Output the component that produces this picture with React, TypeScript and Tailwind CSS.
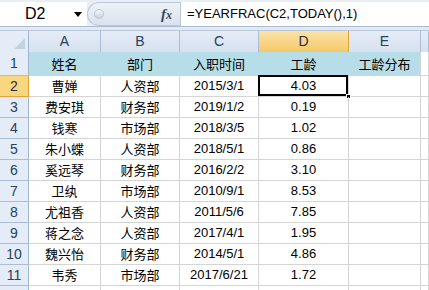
import React from 'react'

const rows = [
  ['曹婵', '人资部', '2015/3/1', '4.03'],
  ['费安琪', '财务部', '2019/1/2', '0.19'],
  ['钱寒', '市场部', '2018/3/5', '1.02'],
  ['朱小蝶', '人资部', '2018/5/1', '0.86'],
  ['奚远琴', '财务部', '2016/2/2', '3.10'],
  ['卫纨', '市场部', '2010/9/1', '8.53'],
  ['尤祖香', '人资部', '2011/5/6', '7.85'],
  ['蒋之念', '人资部', '2017/4/1', '1.95'],
  ['魏兴怡', '财务部', '2014/5/1', '4.86'],
  ['韦秀', '市场部', '2017/6/21', '1.72'],
]

const cjk = "font-['Noto_Sans_CJK_SC',sans-serif] text-[13px]"
const latin = "font-['Liberation_Sans',Arial,sans-serif] text-[13px]"
const cols = 'grid grid-cols-[29px_72px_79px_79px_90px_72px_1fr]'

const ColHead = ({ label, active }: { label: string; active?: boolean }) => (
  <div
    className={
      'flex items-center justify-center border-r text-[14px] ' +
      (active
        ? 'bg-gradient-to-b from-[#fbe3a8] to-[#f5c966] border-[#e0a23a] text-[#1f2f45]'
        : 'bg-gradient-to-b from-[#e4ecf7] to-[#d7e2ef] border-[#a9bdd4] text-[#27415f]')
    }
  >
    {label}
  </div>
)

const RowHead = ({ n, active, h }: { n: number; active?: boolean; h: string }) => (
  <div
    className={
      'flex items-center justify-center border-r border-b text-[14px] ' +
      h +
      ' ' +
      (active
        ? 'bg-[#f8d77f] border-[#e0a23a] text-[#1f2f45]'
        : 'bg-[#e4ecf7] border-r-[#9eb6ce] border-b-[#a9bdd4] text-[#27415f]')
    }
  >
    {n}
  </div>
)

const Cell = ({ children, cls = '' }: { children?: React.ReactNode; cls?: string }) => (
  <div className={'flex items-center justify-center border-r border-b border-[#d4d4d4] text-black ' + cls}>
    {children}
  </div>
)

export default function App() {
  return (
    <div className={'w-[429px] h-[290px] overflow-hidden bg-white flex flex-col ' + latin}>
      {/* formula bar */}
      <div className="h-[27px] flex border-b border-[#a9bdd4] bg-[#e9eef5] pt-[2px] shrink-0">
        <div className="w-[87px] flex items-center bg-white relative">
          <span className="text-[16px] text-black ml-[25px]">D2</span>
          <span className="absolute left-[74px] top-[10px] w-0 h-0 border-l-[4px] border-r-[4px] border-t-[5px] border-l-transparent border-r-transparent border-t-black" />
        </div>
        <div className="w-[93px] flex items-center rounded-l-full bg-gradient-to-b from-[#eef2f8] to-[#d9e2ee] border border-[#b9c7d8] border-r-0">
          <span className="ml-[6px] w-[10px] h-[10px] rounded-full bg-gradient-to-b from-[#f7f9fc] to-[#c7d2df] border border-[#b9c7d8]" />
          <span className="ml-auto mr-[8px] font-['Liberation_Serif',serif] italic font-bold text-[15px] text-[#3b4a5c]">
            f<span className="text-[12px]">x</span>
          </span>
        </div>
        <div className="flex-1 flex items-center bg-white border-l border-[#b9c7d8] pl-[6px] text-[13px] text-black">
          =YEARFRAC(C2,TODAY(),1)
        </div>
      </div>
      <div className="h-[4px] bg-[#e2e9f2] border-b border-[#b9c7d8] shrink-0" />
      {/* column headers */}
      <div className={cols + ' h-[21px] border-b border-[#9eb6ce] shrink-0'}>
        <div className="relative bg-[#e4ecf7] border-r border-[#9eb6ce]">
          <span className="absolute right-[3px] bottom-[3px] w-0 h-0 border-l-[11px] border-t-[11px] border-l-transparent border-t-transparent border-b-0 border-r-[11px] border-r-[#c5d1df]" />
        </div>
        <ColHead label="A" />
        <ColHead label="B" />
        <ColHead label="C" />
        <ColHead label="D" active />
        <ColHead label="E" />
        <ColHead label="" />
      </div>
      {/* row 1 */}
      <div className={cols + ' h-[24px] shrink-0'}>
        <RowHead n={1} h="h-[24px]" />
        <Cell cls={'bg-[#b7dee8] border-r-[#b7dee8] ' + cjk}>姓名</Cell>
        <Cell cls={'bg-[#b7dee8] border-r-[#b7dee8] ' + cjk}>部门</Cell>
        <Cell cls={'bg-[#b7dee8] border-r-[#b7dee8] ' + cjk}>入职时间</Cell>
        <Cell cls={'bg-[#b7dee8] border-r-[#b7dee8] ' + cjk}>工龄</Cell>
        <Cell cls={'bg-[#b7dee8] ' + cjk}>工龄分布</Cell>
        <Cell />
      </div>
      {rows.map((r, i) => (
        <div key={i} className={cols + ' h-[21px] shrink-0'}>
          <RowHead n={i + 2} h="h-[21px]" active={i === 0} />
          <Cell cls={cjk}>{r[0]}</Cell>
          <Cell cls={cjk}>{r[1]}</Cell>
          <Cell>{r[2]}</Cell>
          <Cell cls="relative">
            {r[3]}
            {i === 0 && (
              <>
                <span className="absolute -left-[1px] -top-[1px] -right-0 -bottom-0 border-2 border-black" />
                <span className="absolute -right-[3px] -bottom-[3px] w-[5px] h-[5px] bg-black border border-white" />
              </>
            )}
          </Cell>
          <Cell />
          <Cell />
        </div>
      ))}
      <div className={cols + ' h-[21px] shrink-0'}>
        <RowHead n={12} h="h-[21px]" />
        <Cell />
        <Cell />
        <Cell />
        <Cell />
        <Cell />
        <Cell />
      </div>
    </div>
  )
}
